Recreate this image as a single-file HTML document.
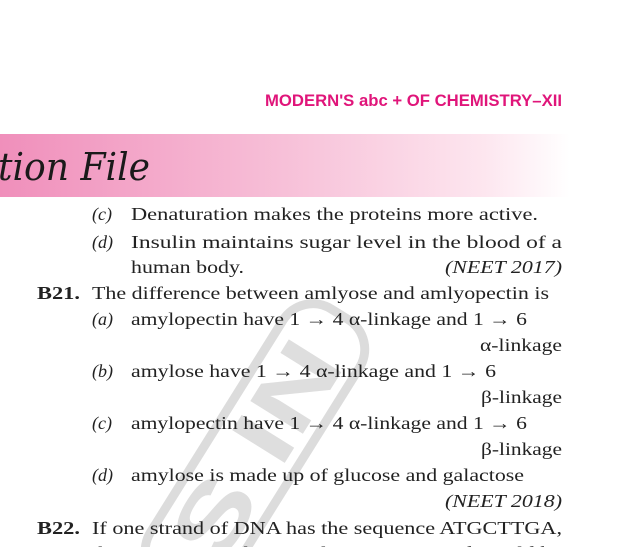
<!DOCTYPE html>
<html><head><meta charset="utf-8"><style>
html,body{margin:0;padding:0;background:#fff;width:638px;height:547px;overflow:hidden;}
svg{display:block}
</style></head><body>
<svg width="638" height="547" viewBox="0 0 638 547" xmlns="http://www.w3.org/2000/svg">
<defs>
<linearGradient id="g" x1="0" x2="1" y1="0" y2="0">
<stop offset="0" stop-color="#f08fbb"/>
<stop offset="0.5" stop-color="#f7c0d8"/>
<stop offset="0.85" stop-color="#fde6ef"/>
<stop offset="1" stop-color="#ffffff"/>
</linearGradient>
</defs>
<rect x="0" y="134" width="570" height="63" fill="url(#g)"/>
<text x="265" y="106" font-family="Liberation Sans, sans-serif" font-weight="bold" font-size="17" fill="#e0157a" textLength="297" lengthAdjust="spacingAndGlyphs">MODERN'S abc + OF CHEMISTRY–XII</text>
<text x="-2" y="180" font-family="DejaVu Serif, serif" font-style="italic" font-size="38" fill="#1a1a1a" textLength="152" lengthAdjust="spacingAndGlyphs">tion File</text>

<g transform="translate(255,450) rotate(-58)">
<rect x="-160" y="-45" width="320" height="90" rx="35" fill="none" stroke="#dcdcdc" stroke-width="9"/>
<text x="0" y="32" text-anchor="middle" font-family="Liberation Sans, sans-serif" font-weight="bold" font-size="90" fill="#dedede" textLength="240" lengthAdjust="spacingAndGlyphs">S IN</text>
</g>

<g font-family="Liberation Serif, serif" font-size="18" fill="#222">
<text x="92" y="220" font-style="italic">(c)</text>
<text x="131" y="220" textLength="407" lengthAdjust="spacingAndGlyphs">Denaturation makes the proteins more active.</text>
<text x="92" y="248" font-style="italic">(d)</text>
<text x="131" y="248" textLength="431" lengthAdjust="spacingAndGlyphs">Insulin maintains sugar level in the blood of a</text>
<text x="131" y="273" textLength="113" lengthAdjust="spacingAndGlyphs">human body.</text>
<text x="445" y="273" font-style="italic" textLength="117" lengthAdjust="spacingAndGlyphs">(NEET 2017)</text>
<text x="37" y="299" font-weight="bold" textLength="43" lengthAdjust="spacingAndGlyphs">B21.</text>
<text x="92" y="299" textLength="457" lengthAdjust="spacingAndGlyphs">The difference between amlyose and amlyopectin is</text>
<text x="92" y="325" font-style="italic">(a)</text>
<text x="131" y="325" textLength="396" lengthAdjust="spacingAndGlyphs">amylopectin have 1 → 4 α-linkage and 1 → 6</text>
<text x="480" y="351" textLength="82" lengthAdjust="spacingAndGlyphs">α-linkage</text>
<text x="92" y="377" font-style="italic">(b)</text>
<text x="131" y="377" textLength="365" lengthAdjust="spacingAndGlyphs">amylose have 1 → 4 α-linkage and 1 → 6</text>
<text x="481" y="403" textLength="81" lengthAdjust="spacingAndGlyphs">β-linkage</text>
<text x="92" y="429" font-style="italic">(c)</text>
<text x="131" y="429" textLength="396" lengthAdjust="spacingAndGlyphs">amylopectin have 1 → 4 α-linkage and 1 → 6</text>
<text x="481" y="455" textLength="81" lengthAdjust="spacingAndGlyphs">β-linkage</text>
<text x="92" y="481" font-style="italic">(d)</text>
<text x="131" y="481" textLength="393" lengthAdjust="spacingAndGlyphs">amylose is made up of glucose and galactose</text>
<text x="445" y="507" font-style="italic" textLength="117" lengthAdjust="spacingAndGlyphs">(NEET 2018)</text>
<text x="37" y="534" font-weight="bold" textLength="43" lengthAdjust="spacingAndGlyphs">B22.</text>
<text x="92" y="534" textLength="470" lengthAdjust="spacingAndGlyphs">If one strand of DNA has the sequence ATGCTTGA,</text>
<text x="92" y="559" textLength="470" lengthAdjust="spacingAndGlyphs">the sequence in the complementary strand would be</text>
</g>
</svg>
</body></html>
